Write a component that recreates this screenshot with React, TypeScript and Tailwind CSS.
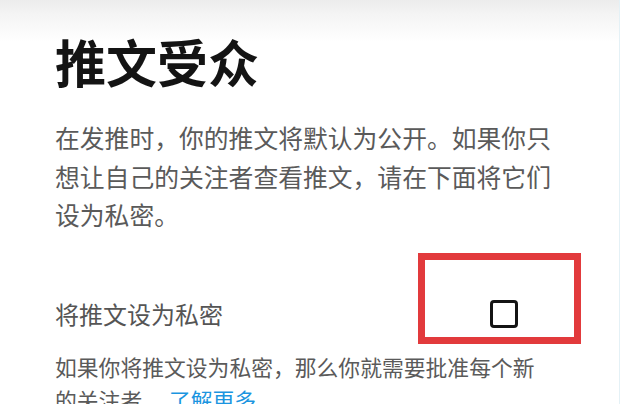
export default function App() {
	return (
		<div className="w-[620px] h-[404px] overflow-hidden bg-[linear-gradient(to_bottom,#ececec_0px,#f4f4f4_14px,#ffffff_42px)] border-r border-[#e4f1f6] pl-[55px] pr-[38px] pt-[35px] font-['Noto_Sans_CJK_SC',sans-serif]">
			{/* Page title */}
			<h1 className="text-[51px] leading-[52px] font-bold text-[#141414]">推文受众</h1>

			<p className="w-[505px] mt-[31px] text-[24.8px] leading-[38.7px] text-[#5a5a5a]">
				在发推时，你的推文将默认为公开。如果你只想让自己的关注者查看推文，请在下面将它们设为私密。
			</p>

			{/* Protect toggle row */}
			<div className="flex items-end justify-between mt-[19px]">
				<span className="mb-[15px] text-[24px] leading-[30px] text-[#555555]">将推文设为私密</span>
				<div className="w-[163px] h-[91px] border-[7px] border-[#e23a3c] pt-[40px] pl-[65px]">
					<div className="w-[28px] h-[28px] border-[3px] border-[#141414] rounded-[4px] bg-white" />
				</div>
			</div>

			<p className="w-[490px] mt-[6px] text-[21.8px] leading-[33px] text-[#5a5a5a]">
				如果你将推文设为私密，那么你就需要批准每个新的关注者。 <span className="text-[#1b95e0]">了解更多</span>
			</p>
		</div>
	)
}
